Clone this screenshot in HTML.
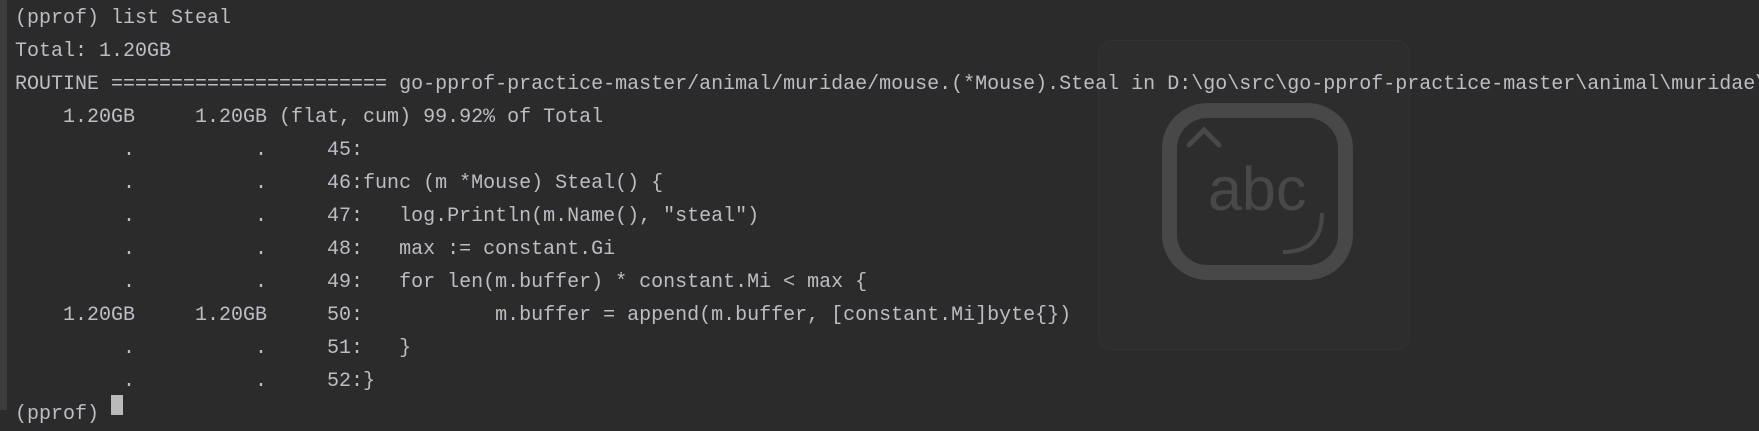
<!DOCTYPE html>
<html><head><meta charset="utf-8"><style>
html,body{margin:0;padding:0;}
body{width:1759px;height:410px;background:#2b2b2b;overflow:hidden;position:relative;}
.strip{position:absolute;left:0;top:0;width:7px;height:410px;background:#3a3c3e;}
.box{position:absolute;left:1098px;top:40px;width:312px;height:310px;border-radius:14px;background:#2d2d2d;border:1px solid #323232;box-sizing:border-box;}
svg{position:absolute;left:0;top:0;}
pre{position:absolute;left:15px;top:2px;margin:0;font-family:"Liberation Mono",monospace;font-size:20px;line-height:33px;color:#bcbec4;white-space:pre;z-index:2;}
.cur{position:absolute;left:111px;top:395px;width:12px;height:20px;background:#bbbbbb;z-index:3;}
</style></head><body>
<div class="strip"></div>
<div class="box"></div>
<svg width="1759" height="410">
<rect x="1169.5" y="110.5" width="176" height="162" rx="38" fill="none" stroke="#484848" stroke-width="15"/>
<path d="M1189 145 L1204 130 L1219 145" fill="none" stroke="#484848" stroke-width="5" stroke-linecap="round"/>
<text x="1208" y="210" font-family="Liberation Sans, sans-serif" font-size="61" fill="#484848">abc</text>
<path d="M1322 213 Q1322 252 1283 252" fill="none" stroke="#484848" stroke-width="4"/>
</svg>
<pre>(pprof) list Steal
Total: 1.20GB
ROUTINE ======================= go-pprof-practice-master/animal/muridae/mouse.(*Mouse).Steal in D:\go\src\go-pprof-practice-master\animal\muridae\mouse.go
    1.20GB     1.20GB (flat, cum) 99.92% of Total
         .          .     45:
         .          .     46:func (m *Mouse) Steal() {
         .          .     47:   log.Println(m.Name(), "steal")
         .          .     48:   max := constant.Gi
         .          .     49:   for len(m.buffer) * constant.Mi &lt; max {
    1.20GB     1.20GB     50:           m.buffer = append(m.buffer, [constant.Mi]byte{})
         .          .     51:   }
         .          .     52:}
(pprof) </pre>
<div class="cur"></div>
</body></html>
